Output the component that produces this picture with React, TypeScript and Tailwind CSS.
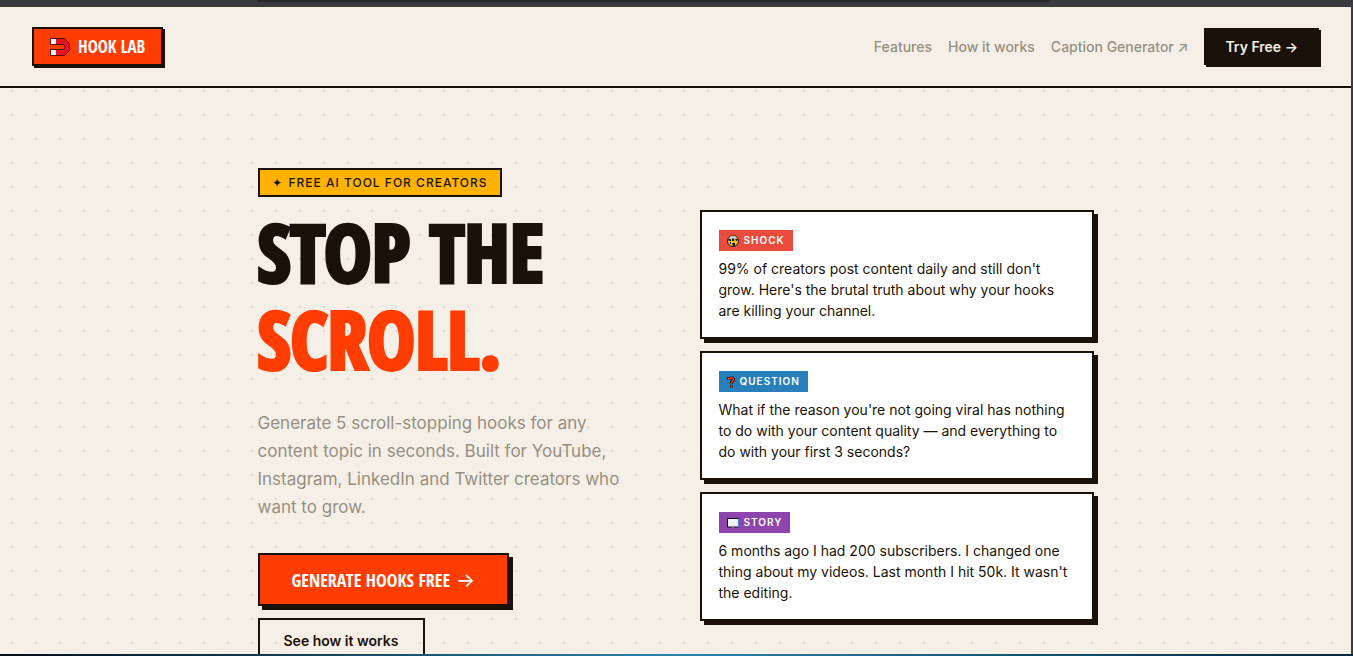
import type { ReactNode } from 'react';

interface Hook {
  label: string;
  icon: ReactNode;
  color: string;
  text: string;
}

function MagnetIcon() {
  return (
    <svg viewBox="0 0 20 18" className="h-[18px] w-5 shrink-0" aria-hidden="true">
      <path d="M.5.5h14l5 5v7l-5 5H.5v-6h12.500l2-1.500V8l-2-1.500H.5z" fill="#e81224" stroke="#5a0d12" />
      <path d="M1 1h5v5H1zM1 12h5v5H1z" fill="#f2f2f2" />
    </svg>
  );
}

function ShockIcon() {
  return (
    <svg viewBox="0 0 12 12" className="size-3 shrink-0" aria-hidden="true">
      <circle cx="6" cy="6" r="5.500" fill="#fcc62d" stroke="#1a1208" />
      <path d="M2.500 2.500C4 0 8 0 9.500 2.500L8 4.500H4z" fill="#c9ced3" />
      <path d="M1 4h3v2H2zM8 4h3l-1 2H9zM5 3.500h2V6H5z" fill="#1a1208" />
      <path d="M5 8h3v3H6zM3 7h1v2H3z" fill="#1a1208" />
    </svg>
  );
}

function QuestionIcon() {
  return (
    <svg viewBox="0 0 8 12" className="h-3 w-2 shrink-0" aria-hidden="true">
      <path d="M1.500 4V2.500h1L3.500 2h2l1 1v1.500L4.500 6v2" fill="none" stroke="#1a1208" strokeWidth="3" />
      <path d="M1.500 4V2.500h1L3.500 2h2l1 1v1.500L4.500 6v2" fill="none" stroke="#f03a17" strokeWidth="1.500" />
      <circle cx="4.500" cy="10.300" r="1.300" fill="#f03a17" stroke="#1a1208" strokeWidth=".7" />
    </svg>
  );
}

function BookIcon() {
  return (
    <svg viewBox="0 0 12 10" className="h-2.5 w-3 shrink-0" aria-hidden="true">
      <path d="M.5.5h11v8.500H.5z" fill="#f2f2f2" stroke="#0a0a14" />
      <path d="M11.500 1v8" stroke="#3f7be0" />
      <path d="M5.500 9h1v.8h-1z" fill="#f2f2f2" />
    </svg>
  );
}

const hooks: Hook[] = [
  {
    label: 'Shock',
    icon: <ShockIcon />,
    color: 'bg-[#e94b3c]',
    text: "99% of creators post content daily and still don't grow. Here's the brutal truth about why your hooks are killing your channel.",
  },
  {
    label: 'Question',
    icon: <QuestionIcon />,
    color: 'bg-[#2780bb]',
    text: "What if the reason you're not going viral has nothing to do with your content quality — and everything to do with your first 3 seconds?",
  },
  {
    label: 'Story',
    icon: <BookIcon />,
    color: 'bg-[#8e44ad]',
    text: "6 months ago I had 200 subscribers. I changed one thing about my videos. Last month I hit 50k. It wasn't the editing.",
  },
];

function HookCard({ hook }: { hook: Hook }) {
  return (
    <article className="border-2 border-[#1a1208] bg-white px-[17px] pt-[18px] pb-4 shadow-[4px_4px_0_#1a1208]">
      <div className={`mb-[7px] flex h-[21px] w-fit items-center gap-[5px] px-2 text-[10px] font-semibold tracking-[1px] text-white uppercase ${hook.color}`}>
        {hook.icon}
        <span>{hook.label}</span>
      </div>
      <p className="text-sm leading-[21px]">{hook.text}</p>
    </article>
  );
}

function Header() {
  return (
    <header className="flex items-center justify-between border-b-2 border-[#1a1208] bg-[#f5efe7] px-8 py-5">
      <a
        href="#top"
        className="flex h-[39px] items-center gap-2 border-2 border-[#1a1208] bg-[#ff3d00] px-4 font-['Open_Sans_Condensed','Roboto_Condensed',sans-serif] text-[17px] font-bold text-white shadow-[2px_2px_0_#1a1208]"
      >
        <MagnetIcon />
        <span>HOOK LAB</span>
      </a>
      <nav className="flex items-center gap-4 text-sm font-medium text-[#968f82]">
        <a href="#features">Features</a>
        <a href="#how">How it works</a>
        <a href="#captions">Caption Generator ↗</a>
        <a href="#try" className="flex h-[37px] items-center bg-[#1a1208] px-[21px] font-semibold text-[#f5efe7] shadow-[2px_2px_0_#1a1208]">
          Try Free →
        </a>
      </nav>
    </header>
  );
}

function Hero() {
  return (
    <main id="top" className="mx-auto grid w-full max-w-[900px] grid-cols-2 items-center gap-12 px-8 pt-20">
      <div>
        <p className="flex h-[29px] w-fit items-center gap-1.5 border-2 border-[#1a1208] bg-[#ffb300] px-3 text-xs font-medium tracking-[1px] uppercase">
          <span>✦</span>
          <span>Free AI tool for creators</span>
        </p>
        <h1 className="mt-2.5 mb-7 font-['Open_Sans_Condensed','Roboto_Condensed',sans-serif] text-[80px] leading-[87px] font-bold [-webkit-text-stroke:4px_currentColor]">
          STOP THE
          <br />
          <span className="text-[#ff3d00]">SCROLL.</span>
        </h1>
        <p className="text-[17px] leading-7 text-[#968f82]">
          Generate 5 scroll-stopping hooks for any content topic in seconds. Built for YouTube, Instagram, LinkedIn and Twitter creators who want to grow.
        </p>
        <div className="mt-8 flex flex-col items-start gap-3">
          <button
            type="button"
            className="flex h-[53px] items-center gap-1.5 border-2 border-[#1a1208] bg-[#ff3d00] px-8 font-['Open_Sans_Condensed','Roboto_Condensed',sans-serif] text-lg font-bold text-white shadow-[4px_4px_0_#1a1208]"
          >
            <span>GENERATE HOOKS FREE</span>
            <span className="font-['Inter',sans-serif] text-xl font-normal">→</span>
          </button>
          <button type="button" className="h-[45px] border-2 border-[#1a1208] px-6 text-sm font-semibold">
            See how it works
          </button>
        </div>
      </div>
      <div className="flex flex-col gap-3">
        {hooks.map((hook) => (
          <HookCard key={hook.label} hook={hook} />
        ))}
      </div>
    </main>
  );
}

export default function App() {
  return (
    <div className="flex h-screen flex-col overflow-hidden bg-[#3a393b] font-['Inter',sans-serif] text-[#1a1208]">
      <div className="h-[7px] shrink-0">
        <div className="ml-[19%] h-0.5 w-[58.5%] rounded-b-sm bg-[#252426]" />
      </div>
      <div className="mr-0.5 min-h-0 flex-1 overflow-hidden bg-[#f5efe7] bg-[radial-gradient(circle,#ddd8d0_1px,transparent_1px)] bg-[size:24px_24px]">
        <Header />
        <Hero />
      </div>
      <div className="h-0.5 shrink-0 bg-linear-to-r from-[#04101f] via-[#2b86ac] to-[#04263f]" />
    </div>
  );
}
